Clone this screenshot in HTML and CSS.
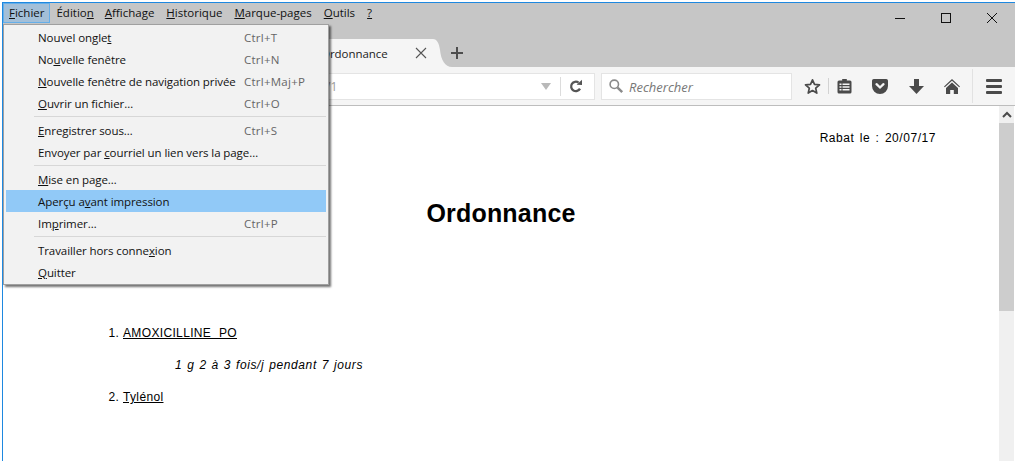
FILE: index.html
```html
<!DOCTYPE html>
<html lang="fr">
<head>
<meta charset="utf-8">
<title>Ordonnance</title>
<link rel="stylesheet" href="styles.css">
</head>
<body>
<div class="window">
  <div class="menubar">
    <span class="mb-item active"><u>F</u>ichier</span>
    <span class="mb-item mb-edit">Éditio<u>n</u></span>
    <span class="mb-item"><u>A</u>ffichage</span>
    <span class="mb-item"><u>H</u>istorique</span>
    <span class="mb-item"><u>M</u>arque-pages</span>
    <span class="mb-item"><u>O</u>utils</span>
    <span class="mb-item"><u>?</u></span>
    <div class="winctl">
      <svg class="wc wc-min" width="12" height="12" viewBox="0 0 12 12"><path d="M1 6.500h10" stroke="#111" fill="none"/></svg>
      <svg class="wc wc-max" width="12" height="12" viewBox="0 0 12 12"><rect x="1.500" y="1.500" width="9" height="9" stroke="#111" fill="none"/></svg>
      <svg class="wc wc-close" width="12" height="12" viewBox="0 0 12 12"><path d="M1 1l10 10M11 1L1 11" stroke="#111" fill="none"/></svg>
    </div>
  </div>
  <div class="tabrow">
    <div class="tab">
      <span class="tab-title">Ordonnance</span>
      <svg class="tab-close" width="12" height="12" viewBox="0 0 12 12"><path d="M1 1l10 10M11 1L1 11" stroke="#555" stroke-width="1.100" fill="none"/></svg>
    </div>
    <svg class="tab-curve" width="20" height="28" viewBox="0 0 20 28"><path d="M0 0H1C5 0 7 4 8 11C9 21 13 28 20 28H0Z" fill="#f5f5f5"/></svg>
    <svg class="newtab" width="14" height="14" viewBox="0 0 14 14"><path d="M7 1v12M1 7h12" stroke="#4d4d4d" stroke-width="2" fill="none"/></svg>
  </div>
  <div class="navbar">
    <div class="urlbar">
      <span class="url-text">/1</span>
      <svg class="url-drop" width="10" height="7" viewBox="0 0 10 7"><path d="M0 0h10L5 7Z" fill="#b9b9b9"/></svg>
      <span class="url-sep"></span>
      <svg class="url-reload" width="14" height="14" viewBox="0 0 14 14"><path d="M11 9.600A4.700 4.700 0 1 1 9.600 3.600" stroke="#555" stroke-width="2.300" fill="none"/><path d="M7.600 5.800L13 6V.8Z" fill="#555"/></svg>
    </div>
    <div class="search">
      <svg class="search-ico" width="16" height="16" viewBox="0 0 16 16"><circle cx="6.300" cy="6.300" r="4.200" stroke="#8a8a8a" stroke-width="1.600" fill="none"/><path d="M9.600 9.600l4.600 4.600" stroke="#8a8a8a" stroke-width="2.400" fill="none"/></svg>
      <span class="search-text">Rechercher</span>
    </div>
    <span class="btn btn-star">
      <svg width="17" height="17" viewBox="0 0 17 17"><path d="M8.500 1.800l2 4.600 5 .5-3.800 3.300 1.100 4.900-4.300-2.600-4.300 2.600 1.100-4.900L1.500 6.900l5-.5Z" stroke="#4a4a4a" stroke-width="1.700" stroke-linejoin="round" fill="none"/></svg>
    </span>
    <span class="tb-sep tb-sep-short"></span>
    <span class="btn btn-clip">
      <svg width="15" height="16" viewBox="0 0 15 16"><path d="M2 2.500h3.200V1h4.600v1.500H13a1.500 1.500 0 0 1 1.500 1.500v10a1.500 1.500 0 0 1-1.500 1.500H2A1.500 1.500 0 0 1 .5 14V4A1.500 1.500 0 0 1 2 2.500Z" fill="#4a4a4a"/><path d="M2.500 5.500h2v1.500h-2zM2.500 8.300h2v1.500h-2zM2.500 11.100h2v1.500h-2zM5.500 5.500h7v1.500h-7zM5.500 8.300h7v1.500h-7zM5.500 11.100h7v1.500h-7z" fill="#f5f5f5"/></svg>
    </span>
    <span class="btn btn-pocket">
      <svg width="16" height="15" viewBox="0 0 16 15"><path d="M1.800 0h12.400A1.800 1.800 0 0 1 16 1.800V7a8 8 0 0 1-16 0V1.800A1.800 1.800 0 0 1 1.800 0Z" fill="#4a4a4a"/><path d="M4.500 5.200L8 8.500l3.500-3.300" stroke="#f5f5f5" stroke-width="2.300" stroke-linecap="round" fill="none"/></svg>
    </span>
    <span class="btn btn-dl">
      <svg width="15" height="15" viewBox="0 0 15 15"><path d="M5 0h5v7h5l-7.500 8L0 7h5Z" fill="#4a4a4a"/></svg>
    </span>
    <span class="btn btn-home">
      <svg width="16" height="15" viewBox="0 0 16 15"><path d="M8 0L16 7.500l-.8.800L8 1.800.800 8.300 0 7.500Z" fill="#4a4a4a"/><path d="M8 3.500L14 9v6H9.800v-4H6.200v4H2V9Z" fill="#4a4a4a"/></svg>
    </span>
    <span class="tb-sep tb-sep-tall"></span>
    <span class="btn btn-menu">
      <span class="bar"></span><span class="bar"></span><span class="bar"></span>
    </span>
  </div>
  <div class="main">
    <div class="page">
      <p class="date">Rabat le : 20/07/17</p>
      <h1 class="title">Ordonnance</h1>
      <ol class="rx">
        <li><u>AMOXICILLINE PO</u><p class="dose">1 g 2 à 3 fois/j pendant 7 jours</p></li>
        <li><u>Tylénol</u></li>
      </ol>
    </div>
    <div class="scrollbar">
      <span class="sb-up"><svg width="10" height="7" viewBox="0 0 10 7"><path d="M1 6l4-4 4 4" stroke="#4a4a4a" stroke-width="2" fill="none"/></svg></span>
      <span class="sb-thumb"></span>
    </div>
  </div>
  <div class="menu">
    <div class="mi"><span class="mi-label">Nouvel ongle<u>t</u></span><span class="mi-key">Ctrl+T</span></div>
    <div class="mi"><span class="mi-label">No<u>u</u>velle fenêtre</span><span class="mi-key">Ctrl+N</span></div>
    <div class="mi"><span class="mi-label"><u>N</u>ouvelle fenêtre de navigation privée</span><span class="mi-key">Ctrl+Maj+P</span></div>
    <div class="mi"><span class="mi-label"><u>O</u>uvrir un fichier…</span><span class="mi-key">Ctrl+O</span></div>
    <div class="sep"></div>
    <div class="mi"><span class="mi-label"><u>E</u>nregistrer sous…</span><span class="mi-key">Ctrl+S</span></div>
    <div class="mi"><span class="mi-label">Envoyer par <u>c</u>ourriel un lien vers la page…</span></div>
    <div class="sep"></div>
    <div class="mi"><span class="mi-label"><u>M</u>ise en page…</span></div>
    <div class="mi hot"><span class="mi-label">Aperçu a<u>v</u>ant impression</span></div>
    <div class="mi"><span class="mi-label">Im<u>p</u>rimer…</span><span class="mi-key">Ctrl+P</span></div>
    <div class="sep"></div>
    <div class="mi"><span class="mi-label">Travailler hors conne<u>x</u>ion</span></div>
    <div class="mi"><span class="mi-label"><u>Q</u>uitter</span></div>
  </div>
</div>
</body>
</html>
```
FILE: styles.css
```css
* { box-sizing: border-box; }
html, body { margin: 0; height: 461px; overflow: hidden; background: #fff; }
body { font-family: "Open Sans", "Liberation Sans", sans-serif; }
.window {
  position: relative;
  margin: 2px 0 0 2px;
  height: 459px;
  border-top: 1px solid #1e88e0;
  border-left: 1px solid #1e88e0;
  display: flex;
  flex-direction: column;
  overflow: hidden;
}
.menubar {
  height: 20px;
  background: #c6c6c6;
  display: flex;
  align-items: center;
  font-size: 11.5px;
  color: #111;
}
.mb-item { padding: 0 6px; line-height: 20px; height: 20px; }
.mb-item.active { background: #a3bfd8; outline: 1px solid #65aee8; outline-offset: -1px; }
.mb-edit { margin-right: -1px; }
.winctl { margin-left: auto; display: flex; align-items: center; padding-top: 10px; }
.wc-min { margin-right: 34px; }
.wc-max { margin-right: 34px; }
.wc-close { margin-right: 17px; }
.tabrow {
  height: 44px;
  background: #c6c6c6;
  display: flex;
  align-items: flex-end;
  padding-left: 197px;
}
.tab {
  width: 232px;
  height: 28px;
  background: #f5f5f5;
  display: flex;
  align-items: center;
  padding-left: 121px;
}
.tab-title { font-size: 11.5px; letter-spacing: -.05px; color: #222; width: 94px; }
.tab-curve { display: block; }
.newtab { margin: 0 0 7px -2px; }
.navbar {
  height: 39px;
  background: #f5f5f5;
  border-bottom: 1px solid #bdbdbd;
  display: flex;
  align-items: center;
  padding-left: 200px;
}
.urlbar {
  width: 392px;
  height: 27px;
  background: #fff;
  border: 1px solid #e4e4e4;
  display: flex;
  align-items: center;
  padding-left: 122px;
}
.url-text { font-size: 12px; color: #999; width: 215px; }
.url-drop { margin-right: 9px; }
.url-sep { width: 1px; height: 19px; background: #dcdcdc; margin-right: 8px; }
.search {
  width: 191px;
  height: 27px;
  margin-left: 6px;
  background: #fff;
  border: 1px solid #e4e4e4;
  display: flex;
  align-items: center;
  padding-left: 6px;
}
.search-text { font-size: 13px; font-style: italic; color: #777; margin-left: 5px; padding-top: 1px; }
.btn { display: flex; align-items: center; justify-content: center; height: 27px; }
.btn-star { width: 31px; margin-left: 5px; }
.btn-clip { width: 31px; }
.btn-pocket { width: 40px; }
.btn-dl { width: 32px; }
.btn-home { width: 40px; }
.btn-menu { width: 42px; flex-direction: column; gap: 3px; }
.bar { display: block; width: 16px; height: 3px; background: #4a4a4a; border-radius: 1px; }
.tb-sep { display: block; width: 1px; background: #d2d2d2; }
.tb-sep-short { height: 16px; }
.tb-sep-tall { height: 34px; background: #e2e2e2; }
.main { flex: 1; display: flex; min-height: 0; }
.page {
  flex: 1;
  background: #fff;
  color: #000;
  font-family: "Liberation Sans", Arial, sans-serif;
  font-size: 12px;
  letter-spacing: .35px;
  padding: 24px 0 0 0;
}
.date { margin: 0; text-align: right; padding-right: 63px; line-height: 16px; letter-spacing: .55px; word-spacing: 1.500px; }
.title { margin: 52px 0 0; font-size: 25px; line-height: 30px; text-align: center; letter-spacing: .2px; font-weight: bold; }
.rx { margin: 97px 0 0; padding-left: 120px; list-style: decimal; }
.rx li { line-height: 16px; margin-bottom: 16px; }
.rx u { word-spacing: 4px; }
.dose { margin: 16px 0 0; padding-left: 52px; font-style: italic; letter-spacing: .6px; word-spacing: 1px; }
.scrollbar { width: 16px; display: flex; flex-direction: column; padding-right: 1px; background: #fff; }
.sb-up { height: 17px; background: #f0f0f0; display: flex; align-items: center; justify-content: center; }
.sb-thumb { height: 188px; background: #cdcdcd; }
.scrollbar::after { content: ""; flex: 1; background: #f0f0f0; }
.menu {
  position: absolute;
  left: 0;
  top: 21px;
  width: 326px;
  background: #f2f2f2;
  border: 1px solid #a0a0a0;
  padding: 1px 2px 1px;
  box-shadow: 2px 2px 2px rgba(0,0,0,.55);
  font-size: 11.5px;
  letter-spacing: -.08px;
  color: #111;
}
.mi { height: 22px; display: flex; align-items: center; }
.mi.hot { background: #91c9f7; }
.mi-label { flex: 0 0 238px; padding-left: 32px; white-space: nowrap; }
.mi-key { color: #666; letter-spacing: .25px; }
.sep { height: 1px; background: #d7d7d7; margin: 2px 0 2px 28px; }
```
